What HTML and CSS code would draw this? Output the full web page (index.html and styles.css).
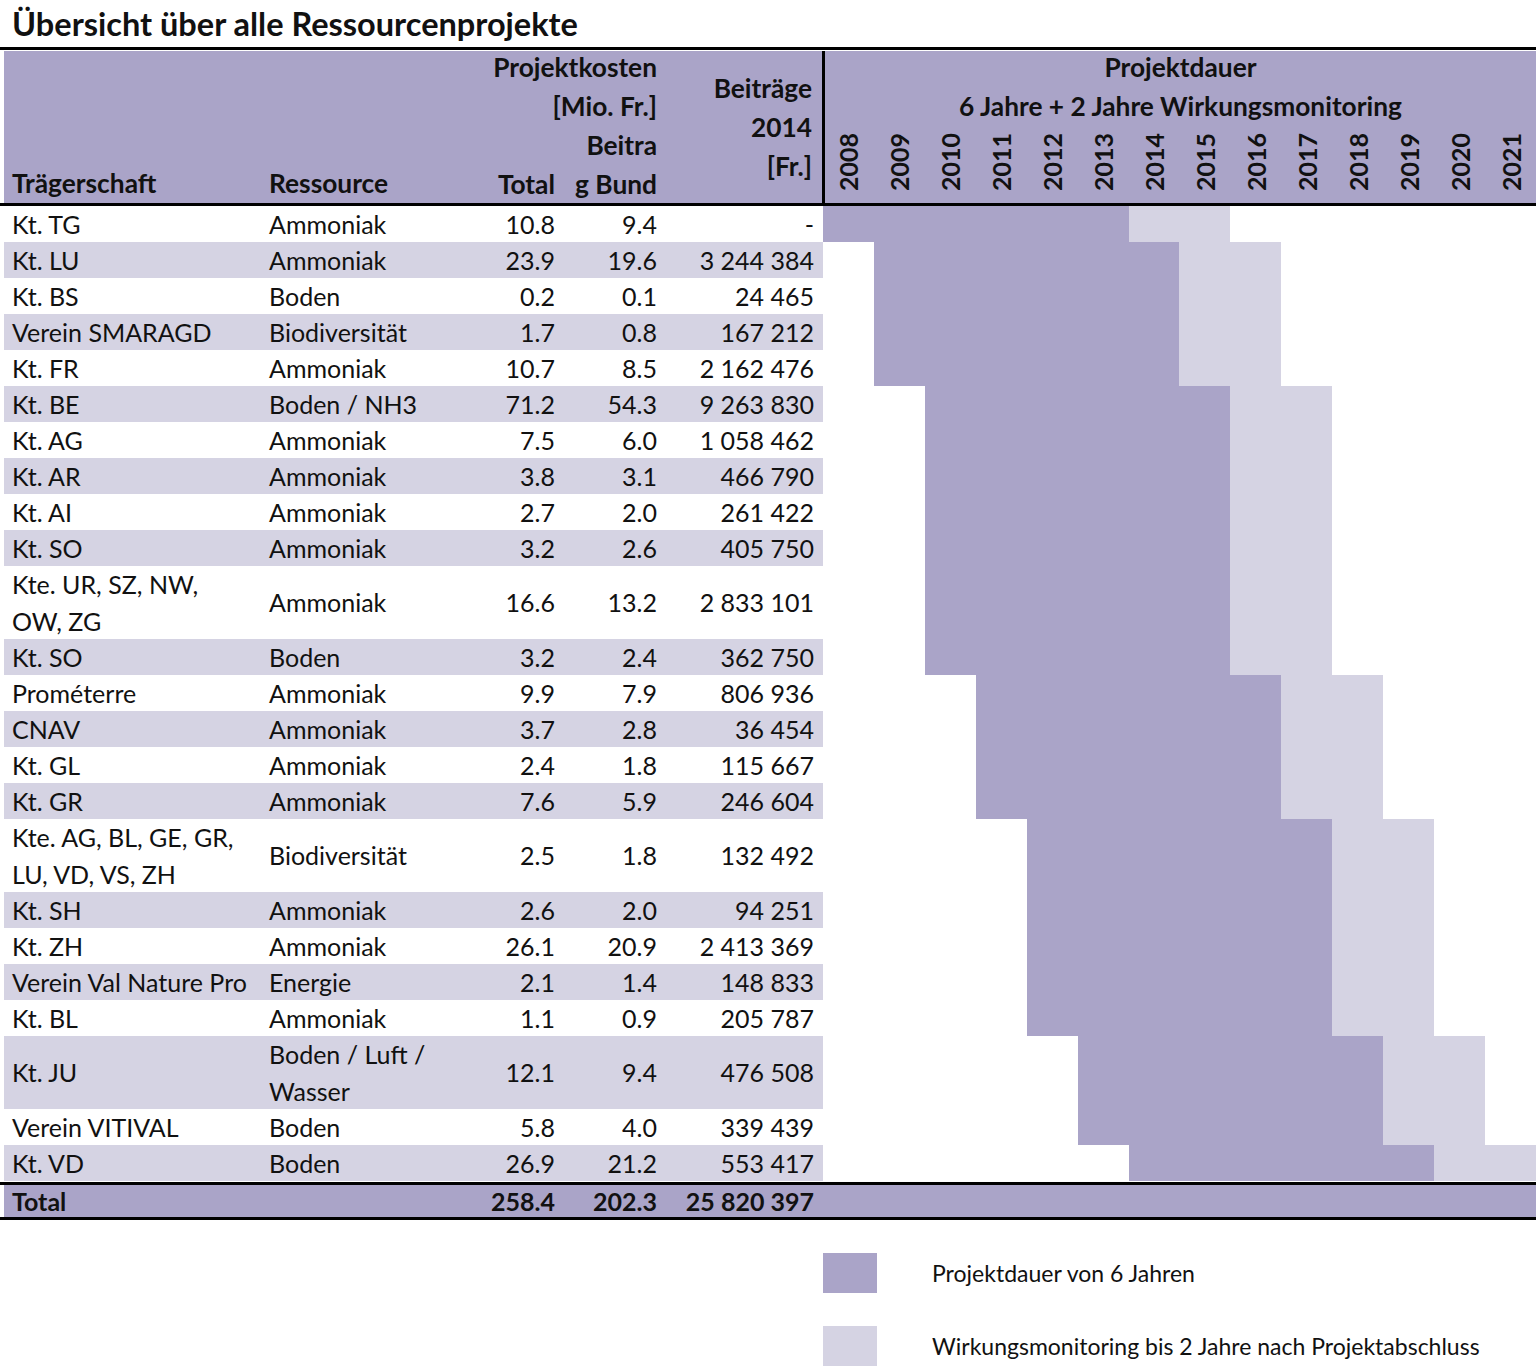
FILE: index.html
```html
<!DOCTYPE html>
<html lang="de">
<head>
<meta charset="utf-8">
<title>Übersicht über alle Ressourcenprojekte</title>
<link rel="stylesheet" href="styles.css">
</head>
<body>
<h1 class="title">Übersicht über alle Ressourcenprojekte</h1>
<div class="sheet">
  <div class="rule rule-top"></div>

  <div class="hd c1 bottom">Trägerschaft</div>
  <div class="hd c2 bottom">Ressource</div>
  <div class="hd c34">
    <div class="span2 first">Projektkosten</div>
    <div class="span2">[Mio. Fr.]</div>
    <div></div><div>Beitra</div>
    <div>Total</div><div>g Bund</div>
  </div>
  <div class="hd c5 middle">Beiträge<br>2014<br>[Fr.]</div>
  <div class="hd gantt-hd">
    <div class="gt-line first">Projektdauer</div>
    <div class="gt-line">6 Jahre + 2 Jahre Wirkungsmonitoring</div>
    <div class="years">
      <span>2008</span><span>2009</span><span>2010</span><span>2011</span><span>2012</span><span>2013</span><span>2014</span>
      <span>2015</span><span>2016</span><span>2017</span><span>2018</span><span>2019</span><span>2020</span><span>2021</span>
    </div>
  </div>

  <div class="rule rule-mid"></div>

  <div class="row"><div class="c1">Kt. TG</div><div class="c2">Ammoniak</div><div class="c3">10.8</div><div class="c4">9.4</div><div class="c5">-</div><div class="bar dark s2008"></div><div class="bar light"></div></div>
  <div class="row alt"><div class="c1">Kt. LU</div><div class="c2">Ammoniak</div><div class="c3">23.9</div><div class="c4">19.6</div><div class="c5">3 244 384</div><div class="bar dark s2009"></div><div class="bar light"></div></div>
  <div class="row"><div class="c1">Kt. BS</div><div class="c2">Boden</div><div class="c3">0.2</div><div class="c4">0.1</div><div class="c5">24 465</div><div class="bar dark s2009"></div><div class="bar light"></div></div>
  <div class="row alt"><div class="c1">Verein SMARAGD</div><div class="c2">Biodiversität</div><div class="c3">1.7</div><div class="c4">0.8</div><div class="c5">167 212</div><div class="bar dark s2009"></div><div class="bar light"></div></div>
  <div class="row"><div class="c1">Kt. FR</div><div class="c2">Ammoniak</div><div class="c3">10.7</div><div class="c4">8.5</div><div class="c5">2 162 476</div><div class="bar dark s2009"></div><div class="bar light"></div></div>
  <div class="row alt"><div class="c1">Kt. BE</div><div class="c2">Boden / NH3</div><div class="c3">71.2</div><div class="c4">54.3</div><div class="c5">9 263 830</div><div class="bar dark s2010"></div><div class="bar light"></div></div>
  <div class="row"><div class="c1">Kt. AG</div><div class="c2">Ammoniak</div><div class="c3">7.5</div><div class="c4">6.0</div><div class="c5">1 058 462</div><div class="bar dark s2010"></div><div class="bar light"></div></div>
  <div class="row alt"><div class="c1">Kt. AR</div><div class="c2">Ammoniak</div><div class="c3">3.8</div><div class="c4">3.1</div><div class="c5">466 790</div><div class="bar dark s2010"></div><div class="bar light"></div></div>
  <div class="row"><div class="c1">Kt. AI</div><div class="c2">Ammoniak</div><div class="c3">2.7</div><div class="c4">2.0</div><div class="c5">261 422</div><div class="bar dark s2010"></div><div class="bar light"></div></div>
  <div class="row alt"><div class="c1">Kt. SO</div><div class="c2">Ammoniak</div><div class="c3">3.2</div><div class="c4">2.6</div><div class="c5">405 750</div><div class="bar dark s2010"></div><div class="bar light"></div></div>
  <div class="row tall"><div class="c1 two">Kte. UR, SZ, NW,<br>OW, ZG</div><div class="c2">Ammoniak</div><div class="c3">16.6</div><div class="c4">13.2</div><div class="c5">2 833 101</div><div class="bar dark s2010"></div><div class="bar light"></div></div>
  <div class="row alt"><div class="c1">Kt. SO</div><div class="c2">Boden</div><div class="c3">3.2</div><div class="c4">2.4</div><div class="c5">362 750</div><div class="bar dark s2010"></div><div class="bar light"></div></div>
  <div class="row"><div class="c1">Prométerre</div><div class="c2">Ammoniak</div><div class="c3">9.9</div><div class="c4">7.9</div><div class="c5">806 936</div><div class="bar dark s2011"></div><div class="bar light"></div></div>
  <div class="row alt"><div class="c1">CNAV</div><div class="c2">Ammoniak</div><div class="c3">3.7</div><div class="c4">2.8</div><div class="c5">36 454</div><div class="bar dark s2011"></div><div class="bar light"></div></div>
  <div class="row"><div class="c1">Kt. GL</div><div class="c2">Ammoniak</div><div class="c3">2.4</div><div class="c4">1.8</div><div class="c5">115 667</div><div class="bar dark s2011"></div><div class="bar light"></div></div>
  <div class="row alt"><div class="c1">Kt. GR</div><div class="c2">Ammoniak</div><div class="c3">7.6</div><div class="c4">5.9</div><div class="c5">246 604</div><div class="bar dark s2011"></div><div class="bar light"></div></div>
  <div class="row tall"><div class="c1 two">Kte. AG, BL, GE, GR,<br>LU, VD, VS, ZH</div><div class="c2">Biodiversität</div><div class="c3">2.5</div><div class="c4">1.8</div><div class="c5">132 492</div><div class="bar dark s2012"></div><div class="bar light"></div></div>
  <div class="row alt"><div class="c1">Kt. SH</div><div class="c2">Ammoniak</div><div class="c3">2.6</div><div class="c4">2.0</div><div class="c5">94 251</div><div class="bar dark s2012"></div><div class="bar light"></div></div>
  <div class="row"><div class="c1">Kt. ZH</div><div class="c2">Ammoniak</div><div class="c3">26.1</div><div class="c4">20.9</div><div class="c5">2 413 369</div><div class="bar dark s2012"></div><div class="bar light"></div></div>
  <div class="row alt"><div class="c1">Verein Val Nature Pro</div><div class="c2">Energie</div><div class="c3">2.1</div><div class="c4">1.4</div><div class="c5">148 833</div><div class="bar dark s2012"></div><div class="bar light"></div></div>
  <div class="row"><div class="c1">Kt. BL</div><div class="c2">Ammoniak</div><div class="c3">1.1</div><div class="c4">0.9</div><div class="c5">205 787</div><div class="bar dark s2012"></div><div class="bar light"></div></div>
  <div class="row alt tall"><div class="c1">Kt. JU</div><div class="c2 two">Boden / Luft /<br>Wasser</div><div class="c3">12.1</div><div class="c4">9.4</div><div class="c5">476 508</div><div class="bar dark s2013"></div><div class="bar light"></div></div>
  <div class="row"><div class="c1">Verein VITIVAL</div><div class="c2">Boden</div><div class="c3">5.8</div><div class="c4">4.0</div><div class="c5">339 439</div><div class="bar dark s2013"></div><div class="bar light"></div></div>
  <div class="row alt"><div class="c1">Kt. VD</div><div class="c2">Boden</div><div class="c3">26.9</div><div class="c4">21.2</div><div class="c5">553 417</div><div class="bar dark s2014"></div><div class="bar light"></div></div>

  <div class="rule rule-total"></div>
  <div class="row total"><div class="c1">Total</div><div class="c2"></div><div class="c3">258.4</div><div class="c4">202.3</div><div class="c5">25 820 397</div><div class="fill"></div></div>
  <div class="rule rule-bottom"></div>
</div>

<div class="legend">
  <div class="legend-item"><span class="swatch dark"></span><span class="legend-text">Projektdauer von 6 Jahren</span></div>
  <div class="legend-item"><span class="swatch light"></span><span class="legend-text">Wirkungsmonitoring bis 2 Jahre nach Projektabschluss</span></div>
</div>
</body>
</html>
```

FILE: styles.css
```css
html, body {
  margin: 0;
  padding: 0;
  background: #ffffff;
}

body {
  width: 1536px;
  font-family: Lato, "Open Sans", "Liberation Sans", sans-serif;
  color: #111111;
  overflow: hidden;
}

.title {
  margin: 0;
  padding: 4px 0 0 12px;
  height: 47px;
  box-sizing: border-box;
  font-size: 32.5px;
  line-height: 40px;
  font-weight: 700;
  letter-spacing: 0;
}

.sheet {
  margin-left: 4px;
  display: grid;
  grid-template-columns: 257px 200px 100px 102px 160px repeat(14, 1fr);
  width: 1532px;
  font-size: 25px;
}

.rule {
  grid-column: 1 / -1;
  margin-left: -4px;
  background: #000000;
  height: 3px;
}
.rule-top { margin-bottom: 1px; }

/* header */
.hd {
  grid-row: 2;
  background: #aaa4c8;
  height: 152px;
  font-weight: 700;
  font-size: 26.3px;
  line-height: 39px;
  display: flex;
  flex-direction: column;
  box-sizing: border-box;
}
.hd.c1 { grid-column: 1; padding-left: 8px; }
.hd.c2 { grid-column: 2; padding-left: 8px; }
.hd.bottom { justify-content: flex-end; }
.hd.middle { justify-content: center; }
.hd.c5 {
  grid-column: 5;
  text-align: right;
  padding-right: 11px;
  display: block;
  padding-top: 18px;
}
.hd.c34 {
  grid-column: 3 / span 2;
  display: grid;
  grid-template-columns: 100px 102px;
  align-content: start;
  text-align: right;
}
.hd.c34 > div { padding-right: 6px; }
.hd.c34 .span2 { grid-column: 1 / -1; }
.hd .first { margin-top: -3px; }

.gantt-hd {
  grid-column: 6 / -1;
  border-left: 3px solid #000000;
  margin-left: -1px;
  text-align: center;
}
.gt-line { line-height: 39px; }
.years {
  display: grid;
  grid-template-columns: repeat(14, 1fr);
  flex: 1;
  align-items: end;
  padding-bottom: 12px;
  margin-left: -2px;
}
.years span {
  writing-mode: vertical-rl;
  transform: rotate(180deg);
  justify-self: center;
  line-height: 26px;
  font-size: 25px;
}

/* body rows */
.row { display: contents; }
.row > div {
  height: 36px;
  line-height: 36px;
  white-space: nowrap;
  overflow: hidden;
  box-sizing: border-box;
}
.row.tall > div { height: 73px; line-height: 73px; }
.row.tall > div.two { line-height: 36.5px; }
.row.alt > .c1, .row.alt > .c2, .row.alt > .c3, .row.alt > .c4, .row.alt > .c5 {
  background: #d5d3e3;
}

.row > .c1 { grid-column: 1; padding-left: 8px; }
.row > .c2 { grid-column: 2; padding-left: 8px; }
.row > .c3 { grid-column: 3; text-align: right; padding-right: 6px; }
.row > .c4 { grid-column: 4; text-align: right; padding-right: 6px; }
.row > .c5 { grid-column: 5; text-align: right; padding-right: 9px; }

.bar.dark { background: #aaa4c8; grid-column-end: span 6; }
.bar.light { background: #d5d3e3; grid-column-end: span 2; }
.s2008 { grid-column-start: 6; }
.s2009 { grid-column-start: 7; }
.s2010 { grid-column-start: 8; }
.s2011 { grid-column-start: 9; }
.s2012 { grid-column-start: 10; }
.s2013 { grid-column-start: 11; }
.s2014 { grid-column-start: 12; }

.row.total > div {
  background: #aaa4c8;
  font-weight: 700;
  height: 32px;
  line-height: 32px;
}
.row.total > .fill { grid-column: 6 / -1; }

.rule-total { margin-top: 1px; }

/* legend */
.legend {
  margin: 33px 0 0 823px;
  display: flex;
  flex-direction: column;
  gap: 33px;
}
.legend-item {
  display: flex;
  align-items: center;
  gap: 55px;
  height: 40px;
}
.swatch {
  width: 54px;
  height: 40px;
  flex: none;
}
.swatch.dark { background: #aaa4c8; }
.swatch.light { background: #d5d3e3; }
.legend-text {
  font-size: 23px;
  line-height: 40px;
}
```
